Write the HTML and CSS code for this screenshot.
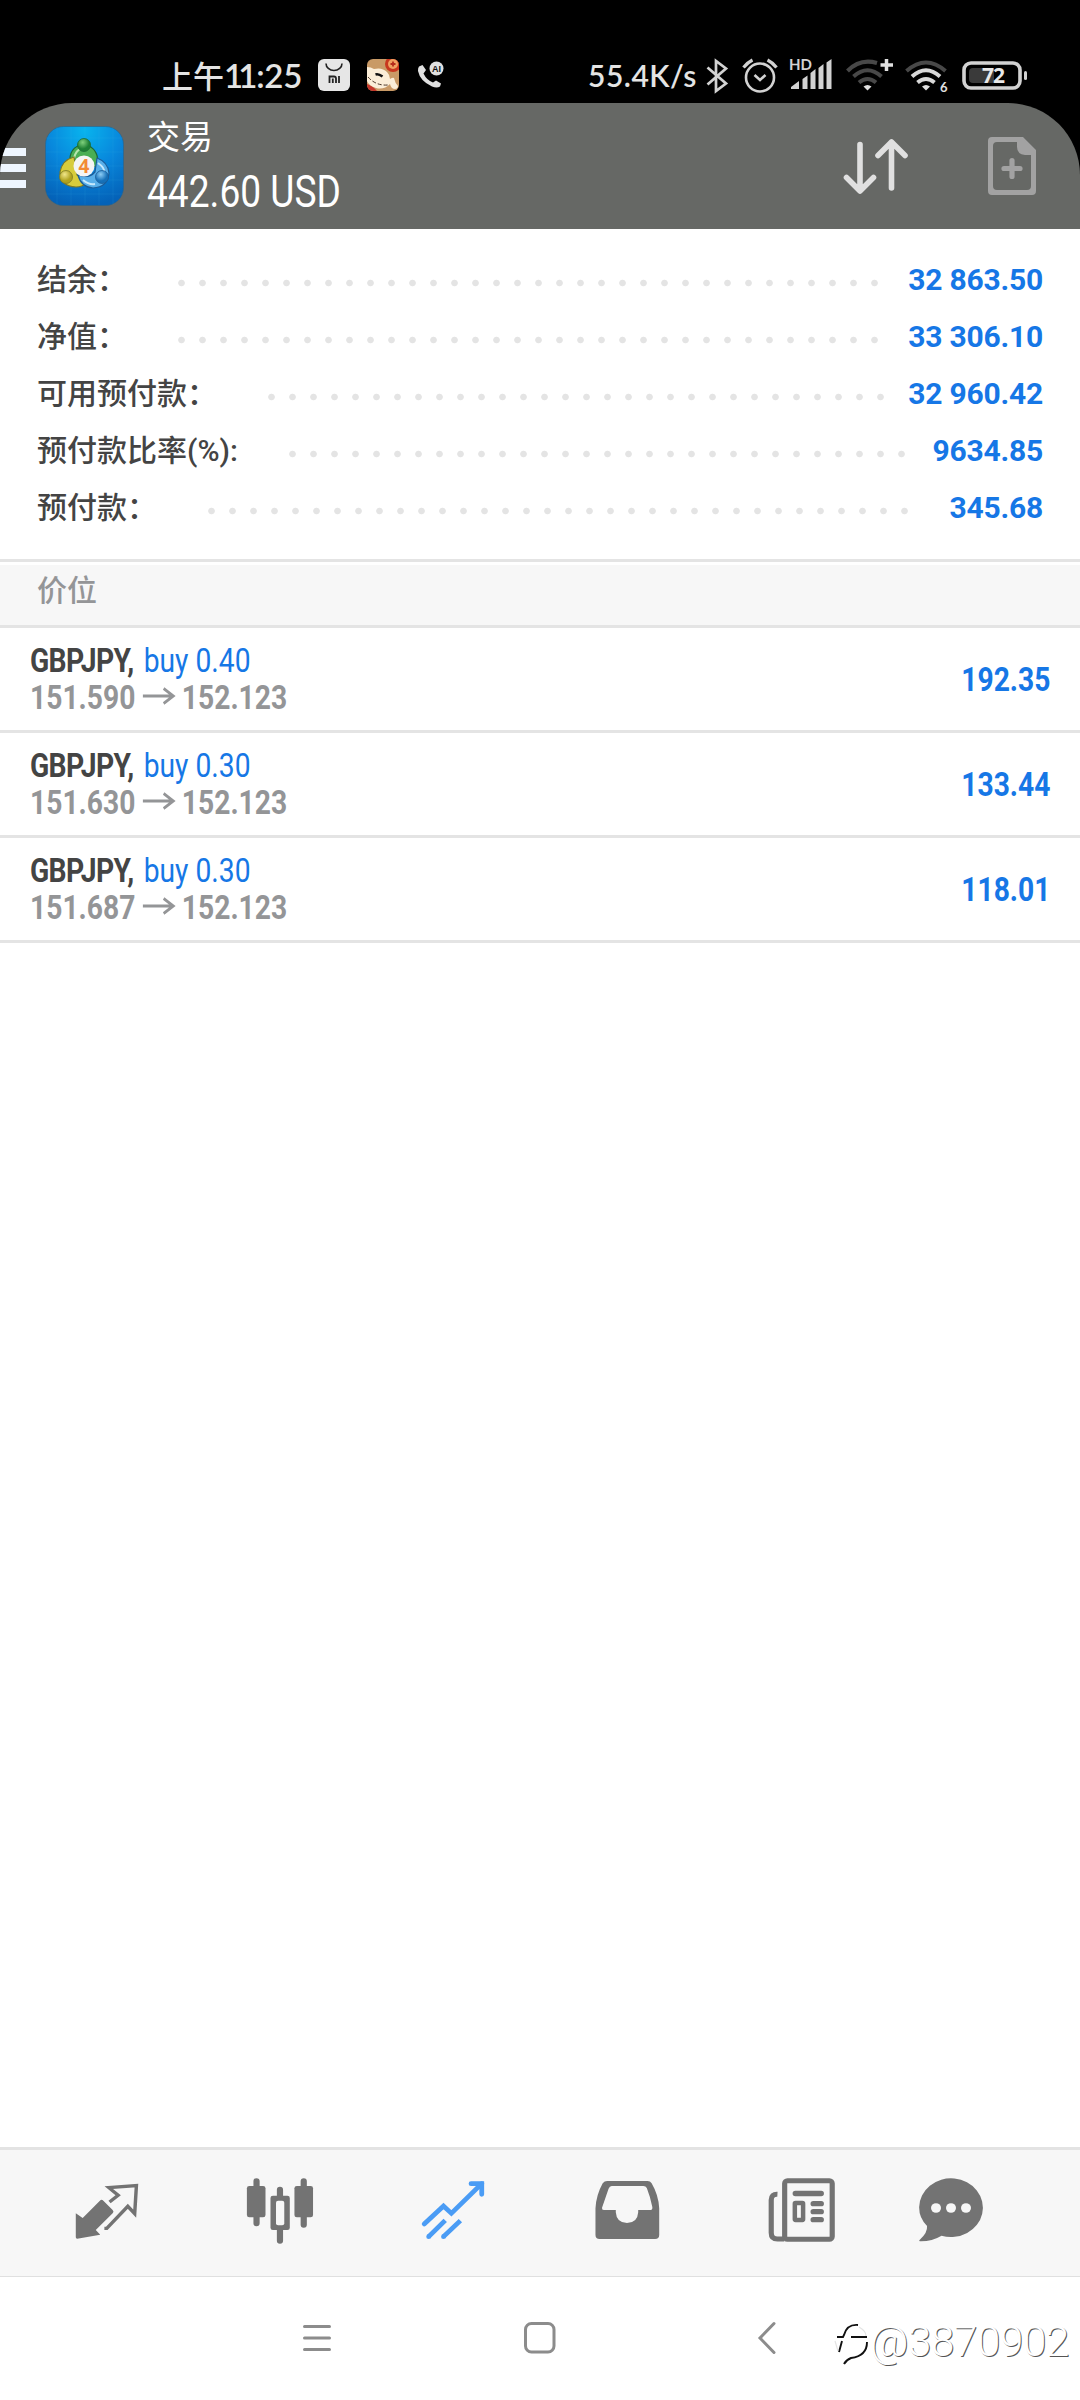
FILE: index.html
```html
<!DOCTYPE html>
<html lang="zh-CN">
<head>
  <meta charset="UTF-8" />
  <meta name="viewport" content="width=device-width, initial-scale=1.0"/>
  <title>交易</title>
  <link rel="stylesheet" href="styles.css">
</head>
<body>
  <div class="status-bar">
    <div class="clock"><span class="ampm">上午</span><span class="time"><span class="ones">11</span>:25</span></div>
    <svg class="ic-mi" viewBox="0 0 32 32">
      <rect width="32" height="32" rx="6" fill="#e6e6e6"/>
      <path d="M8 4.500a8 7 0 0 0 16 0" fill="none" stroke="#222" stroke-width="1.600"/>
      <path d="M11.500 24v-6.500h4.500q2 0 2 2V24M14.800 19.500V24M21 17v7" fill="none" stroke="#222" stroke-width="1.800"/>
    </svg>
    <svg class="ic-cat" viewBox="0 0 32 32">
      <defs><clipPath id="catClip"><rect width="32" height="32" rx="6"/></clipPath></defs>
      <g clip-path="url(#catClip)">
        <rect width="32" height="32" fill="#c99a66"/>
        <path d="M0 25q6 2 10 7H0z" fill="#c5352a"/>
        <path d="M0 8q4 0 7 2 8-2 13 3 3 3 3 7 3-2 4-1 1 5 4 8 0 3-3 3-4 0-5-5-6 6-14 4Q2 27 0 22z" fill="#fbeed8"/>
        <path d="M1 18q8 9 20 8" fill="none" stroke="#4a3528" stroke-width="1" stroke-dasharray="4 2"/>
        <path d="M8.500 15.500q3-1 7 2" fill="none" stroke="#111" stroke-width="2.600"/>
        <circle cx="26" cy="5" r="8" fill="#c8371f"/>
        <circle cx="26" cy="5" r="5" fill="#f0a060"/>
        <path d="M26 2.500v5M23.500 5h5" stroke="#b52c1c" stroke-width="1.800"/>
      </g>
    </svg>
    <svg class="ic-call" viewBox="0 0 28 28">
      <path d="M2 5.500L5.500 4l3.500 5-2.500 3.500q3 6.500 9.500 9l3-2L24 22.500l-1 3q-3 2-8 0Q3 20 1 10 .800 7 2 5.500z" fill="#e0e0e0"/>
      <circle cx="19.500" cy="7.500" r="7" fill="#e0e0e0"/>
      <text class="ai" x="19.400" y="10.700" text-anchor="middle">AI</text>
    </svg>

    <div class="speed">55.4K/s</div>
    <svg class="ic-bt" viewBox="0 0 22 34">
      <path d="M1.500 8.500L20 24.500 10 32V2l10 7.500L1.500 25.500" fill="none" stroke="#d2d2d2" stroke-width="2.700"/>
    </svg>
    <svg class="ic-alarm" viewBox="0 0 36 34">
      <g fill="none" stroke="#d2d2d2" stroke-width="2.600">
        <circle cx="18" cy="18.500" r="14"/>
        <path d="M12.500 16l5.500 5 5.500-5"/>
        <path d="M1.500 8.500q4-5 9-7.500M34.500 8.500q-4-5-9-7.500" stroke-width="3.200"/>
      </g>
    </svg>
    <svg class="ic-signal" viewBox="0 0 42 32">
      <text class="hd" x="-1" y="11">HD</text>
      <path d="M1 30v-2l8-6v8zM12.500 30V20l5-3.500V30zM20.500 30V14l5-4v20zM28.500 30V9l5-4v25zM36.500 30V3.500l5-3.500v30z" fill="#d2d2d2"/>
    </svg>
    <svg class="ic-wifi1" viewBox="0 0 48 32">
      <g fill="none" stroke="#484848" stroke-width="4">
        <path d="M1.500 12Q14-1 31 4"/>
        <path d="M7.500 17.500q14-12.500 28 0"/>
        <path d="M13 23.500q8.500-7 17 0"/>
      </g>
      <path d="M17.500 27.500q4-3 8 0l-4 4z" fill="#e0e0e0"/>
      <path d="M40.500 0v12M34.500 6h12.500" stroke="#e0e0e0" stroke-width="3.500"/>
    </svg>
    <svg class="ic-wifi2" viewBox="0 0 44 34">
      <g fill="none" stroke="#d8d8d8" stroke-width="4">
        <path d="M1.500 12q19.500-17 39 0" stroke="#484848"/>
        <path d="M7 17.500q14-12.500 28 0"/>
        <path d="M12.500 23.500q8.500-7 17 0"/>
      </g>
      <path d="M17 27.500q4-3 8 0l-4 4z" fill="#e0e0e0"/>
      <text class="six" x="35" y="33">6</text>
    </svg>
    <svg class="ic-batt" viewBox="0 0 66 30">
      <rect x="2" y="2" width="56" height="25" rx="7" fill="none" stroke="#d2d2d2" stroke-width="3.600"/>
      <path d="M11 7h21v15H11q-4 0-4-4v-7q0-4 4-4z" fill="#3a3a3a"/>
      <rect x="62" y="10" width="3" height="9" rx="1.500" fill="#d2d2d2"/>
      <text class="pct" x="31" y="22" text-anchor="middle">72</text>
    </svg>
  </div>

  <div class="header">
    <div class="menu"><i></i><i></i><i></i></div>
    <svg class="app-icon" viewBox="0 0 79 80">
      <defs>
        <radialGradient id="bg" cx="50%" cy="5%" r="95%">
          <stop offset="0" stop-color="#08b4ee"/>
          <stop offset=".5" stop-color="#0887dc"/>
          <stop offset="1" stop-color="#0462b8"/>
        </radialGradient>
        <radialGradient id="gGreen" cx="40%" cy="30%"><stop offset="0" stop-color="#7fd07c"/><stop offset="1" stop-color="#1e8034"/></radialGradient>
        <radialGradient id="gYellow" cx="40%" cy="30%"><stop offset="0" stop-color="#f0e68a"/><stop offset="1" stop-color="#b0a21e"/></radialGradient>
        <radialGradient id="gBlue" cx="40%" cy="30%"><stop offset="0" stop-color="#8ccdf5"/><stop offset="1" stop-color="#1670b8"/></radialGradient>
      </defs>
      <rect x=".5" y=".5" width="78" height="79" rx="18" fill="url(#bg)" stroke="#2c6288" stroke-opacity=".6"/>
      <path d="M12 1v78M26 1v78M40 1v78M54 1v78M68 1v78M1 12h77M1 26h77M1 40h77M1 54h77M1 68h77" stroke="#5cc8f5" stroke-opacity=".1"/>
      <path d="M25 38q-2-17 14-20 16 4 14 24l-7-3q-5-8-12-4z" fill="#4aae54" stroke="#1d6a35" stroke-width="1.200"/>
      <path d="M29 32q2-8 8-10" fill="none" stroke="#b5e6ae" stroke-width="2"/>
      <path d="M29 31q-12 3-14 15 0 14 16 15 6 0 11-4l-10-8z" fill="#d7cc3c" stroke="#7c7826" stroke-width="1.200"/>
      <path d="M33 49q3 12 15 13 15-1 16-15-1-11-12-15l-2 14q-6 7-17 3z" fill="#58aee8" stroke="#1b5c98" stroke-width="1.200"/>
      <path d="M38 54q6 5 12 4M53 37q7 5 6 9" fill="none" stroke="#c5e8fc" stroke-width="2"/>
      <circle cx="39" cy="19" r="6.500" fill="url(#gGreen)" stroke="#1d6a35" stroke-width=".8"/>
      <circle cx="21" cy="51" r="6.500" fill="url(#gYellow)" stroke="#7c7826" stroke-width=".8"/>
      <circle cx="57" cy="51" r="6.500" fill="url(#gBlue)" stroke="#1b5c98" stroke-width=".8"/>
      <circle cx="39" cy="40" r="10.500" fill="#f4f4f4"/>
      <text class="four" x="39" y="47" text-anchor="middle">4</text>
    </svg>
    <div class="titles">
      <div class="title">交易</div>
      <div class="profit">442.60 USD</div>
    </div>
    <svg class="ic-sort" viewBox="0 0 66 58">
      <path d="M17 7.500v46M3.500 40.500L17 54l13.500-13.500M48.500 51V5M35 18.500L48.500 5 62 18.500" fill="none" stroke="#e0e0e0" stroke-width="5.600" stroke-linecap="round" stroke-linejoin="round"/>
    </svg>
    <svg class="ic-new" viewBox="0 0 48 58">
      <path fill-rule="evenodd" d="M4 0h31l13 13v41q0 4-4 4H4q-4 0-4-4V4q0-4 4-4zM9 5q-4 0-4 4v40q0 4 4 4h30q4 0 4-4V18h-6q-8-1-8-8V5z" fill="#a2a2a2"/>
      <path d="M24 23.500v16M16 31.500h16" stroke="#a2a2a2" stroke-width="5.200" stroke-linecap="round"/>
    </svg>
  </div>

  <div class="account">
    <div class="line"><span class="label">结余：</span><span class="dots"><i></i></span><span class="num">32 863.50</span></div>
    <div class="line"><span class="label">净值：</span><span class="dots"><i></i></span><span class="num">33 306.10</span></div>
    <div class="line"><span class="label">可用预付款：</span><span class="dots"><i></i></span><span class="num">32 960.42</span></div>
    <div class="line"><span class="label">预付款比率(%):</span><span class="dots"><i></i></span><span class="num">9634.85</span></div>
    <div class="line"><span class="label">预付款：</span><span class="dots"><i></i></span><span class="num">345.68</span></div>
  </div>

  <div class="section">价位</div>

  <div class="positions">
    <div class="position">
      <div class="info">
        <div class="deal"><b>GBPJPY,</b><span>buy 0.40</span></div>
        <div class="prices"><span>151.590</span><svg class="arrow" viewBox="0 0 39 18"><path d="M0 9h36M25 1.500L36.500 9 25 16.500"/></svg><span>152.123</span></div>
      </div>
      <div class="gain">192.35</div>
    </div>
    <div class="position">
      <div class="info">
        <div class="deal"><b>GBPJPY,</b><span>buy 0.30</span></div>
        <div class="prices"><span>151.630</span><svg class="arrow" viewBox="0 0 39 18"><path d="M0 9h36M25 1.500L36.500 9 25 16.500"/></svg><span>152.123</span></div>
      </div>
      <div class="gain">133.44</div>
    </div>
    <div class="position">
      <div class="info">
        <div class="deal"><b>GBPJPY,</b><span>buy 0.30</span></div>
        <div class="prices"><span>151.687</span><svg class="arrow" viewBox="0 0 39 18"><path d="M0 9h36M25 1.500L36.500 9 25 16.500"/></svg><span>152.123</span></div>
      </div>
      <div class="gain">118.01</div>
    </div>
  </div>

  <div class="tabs">
    <!-- quotes -->
    <svg viewBox="0 0 209 216" preserveAspectRatio="none">
      <path d="M11 115l20 14 50-52q5-5 10 0l27 28q5 5 0 10l-49 50 13 14-67 12q-4 0-4-4z" fill="#737373"/>
      <path d="M109 81l25-20-27-23 80-6-5 84-20-22-61 66h-7" fill="none" stroke="#737373" stroke-width="10"/>
    </svg>
    <!-- charts -->
    <svg viewBox="0 0 209 216" preserveAspectRatio="none">
      <path d="M33.500 19v126M101.500 44v153M170.500 19v130" stroke="#737373" stroke-width="18" stroke-linecap="round"/>
      <rect x="5.500" y="33" width="54" height="94" rx="7" fill="#737373"/>
      <rect x="143.500" y="33" width="54" height="94" rx="7" fill="#737373"/>
      <rect x="74" y="62" width="56" height="103" rx="7" fill="#737373"/>
      <rect x="90" y="77" width="24" height="74" rx="6" fill="#f7f7f7"/>
    </svg>
    <!-- trade (active) -->
    <svg viewBox="0 0 209 216" preserveAspectRatio="none">
      <g fill="none" stroke="#4a9cf5" stroke-width="14">
        <path d="M18 147l56-54 23 22 88-89" stroke-linecap="round"/>
        <path d="M154 26h31v32" stroke-linecap="round"/>
        <path d="M31 185l48-49M74 185l49-48"/>
        <path d="M31 185h.1M74 185h.1" stroke-linecap="round"/>
        <path d="M165 26h20v20z" fill="#4a9cf5" stroke="none"/>
      </g>
    </svg>
    <!-- history -->
    <svg viewBox="0 0 209 216" preserveAspectRatio="none">
      <path fill-rule="evenodd" fill="#737373" d="M47 18H164Q172 18 176 25Q196 60 198 100V180Q198 192 186 192H25Q13 192 13 180V100Q15 60 34 25Q39 18 47 18ZM60 33Q54 33 51 41L32 98Q31 105 37 105H72V112Q74 144 104.500 144Q135 144 137 112V105H173Q179 105 178 96Q172 65 162 39Q159 33 152 33Z"/>
    </svg>
    <!-- news -->
    <svg viewBox="0 0 209 216" preserveAspectRatio="none">
      <g fill="none" stroke="#737373" stroke-width="15">
        <rect x="60" y="17.500" width="138" height="175" rx="8"/>
        <path d="M39 58q-18-1-18 17v98q0 19 18 19h20"/>
        <rect x="89.500" y="84" width="24" height="51" stroke-width="13" rx="2"/>
      </g>
      <path d="M91 55.500h75M143 86h23M143 110h23M143 134h23" stroke="#737373" stroke-width="16" stroke-linecap="round"/>
    </svg>
    <!-- chat -->
    <svg viewBox="0 0 209 216" preserveAspectRatio="none">
      <path d="M35 153Q12 130 12 97A92.500 88 0 1 1 77 182Q48 200 14 199 10 198 14 194 37 173 35 153Z" fill="#737373"/>
      <circle cx="61" cy="99" r="14.500" fill="#f7f7f7"/>
      <circle cx="104.500" cy="99" r="14.500" fill="#f7f7f7"/>
      <circle cx="148" cy="99" r="14.500" fill="#f7f7f7"/>
    </svg>
  </div>

  <div class="sysnav">
    <svg class="nav-menu" viewBox="0 0 28 32"><path d="M1.500 4.500h25M1.500 16h25M1.500 27.500h25"/></svg>
    <svg class="nav-home" viewBox="0 0 32 32"><rect x="1.500" y="1.500" width="28.500" height="28.500" rx="6"/></svg>
    <svg class="nav-back" viewBox="0 0 18 32"><path d="M16 1.500L2 16l14 14.500"/></svg>
    <div class="watermark">
      <svg viewBox="0 0 36 44">
        <g fill="none">
          <path d="M24 2Q13 1 10 12l-1 2H3M8 18L5 29M17 14h16M33 19q0 14-16 16-5 2-7 6" stroke="#111" stroke-width="1.900"/>
          <path d="M25 4q7 4 7 9M1 18l3 10" stroke="#e4e4e4" stroke-width="1.200"/>
        </g>
      </svg>
      <span>@3870902</span>
    </div>
  </div>
</body>
</html>
```
FILE: styles.css
```css
* { margin: 0; padding: 0; box-sizing: border-box; }

body {
  width: 1080px;
  height: 2400px;
  display: flex;
  flex-direction: column;
  overflow: hidden;
  background: #fff;
  font-family: Roboto, "Noto Sans CJK SC", sans-serif;
  box-shadow: inset 0 180px 0 #000;
}

svg { display: block; flex: none; overflow: visible; }

/* status bar */
.status-bar {
  height: 103px;
  padding: 59px 0 0 162px;
  display: flex;
  align-items: flex-start;
  color: #e4e4e4;
}

.clock {
  display: flex;
  width: 155.5px;
  height: 32px;
  align-items: center;
  white-space: nowrap;
}

.ampm { font-family: "Noto Sans CJK SC", sans-serif; font-size: 31px; font-weight: 500; line-height: 32px; }
.time { font-family: Lato, sans-serif; font-size: 33px; font-weight: 600; line-height: 32px; letter-spacing: -.3px; }
.ones { letter-spacing: -5px; margin-right: 4px; }

.ic-mi { width: 32px; height: 32px; }
.ic-cat { width: 32px; height: 32px; margin-left: 17px; }
.ic-call { width: 28px; height: 28px; margin: 2px 0 0 18px; }
.ai { font: bold 9px "Liberation Sans", sans-serif; fill: #111; }

.speed {
  width: 118px;
  margin-left: 143.5px;
  font-family: Lato, sans-serif;
  font-size: 30px;
  font-weight: 600;
  line-height: 32px;
  letter-spacing: .5px;
  white-space: nowrap;
}

.ic-bt { width: 22px; height: 34px; }
.ic-alarm { width: 36px; height: 34px; margin-left: 14px; }
.ic-signal { width: 42px; height: 32px; margin-left: 12px; }
.hd { font: bold 15px Lato, sans-serif; fill: #d2d2d2; }
.ic-wifi1 { width: 48px; height: 32px; margin-left: 14px; }
.ic-wifi2 { width: 44px; height: 34px; margin-left: 11px; }
.six { font: bold 13px Lato, sans-serif; fill: #e0e0e0; }
.ic-batt { width: 66px; height: 30px; margin: 2px 0 0 13px; }
.pct { font: bold 21px "Open Sans", sans-serif; fill: #e8e8e8; letter-spacing: -1px; }

/* header */
.header {
  height: 126px;
  display: flex;
  background: #666865;
  border-radius: 72px 72px 0 0;
  overflow: hidden;
  color: #fff;
}

.menu {
  width: 26px;
  height: 40px;
  margin-top: 45px;
  display: flex;
  flex-direction: column;
  gap: 8.5px;
}

.menu i { height: 7.5px; background: #eef6ff; flex: none; }

.app-icon { width: 79px; height: 80px; margin: 23px 0 0 19px; }
.four { font: bold 19px "Open Sans", sans-serif; fill: #f28a35; }

.titles { width: 696px; padding: 11px 0 0 23px; }
.title { font-size: 33px; line-height: 48px; height: 48px; }

.profit {
  display: inline-block;
  font-size: 45px;
  line-height: 60px;
  transform: scaleX(.825);
  transform-origin: left;
}

.ic-sort { width: 66px; height: 58px; margin: 34px 0 0 23px; }
.ic-new { width: 48px; height: 58px; margin: 34px 0 0 79px; }

/* account summary */
.account {
  height: 333px;
  padding: 22px 37px 0;
  background: #fff;
  border-bottom: 3px solid #e4e4e4;
}

.line { display: flex; height: 57px; align-items: center; }
.label { color: #444; font-size: 30px; font-weight: 500; white-space: nowrap; margin-top: -6px; }
.dots { flex: 1; margin: 6px 14px 0 44px; height: 8px; }

.dots i {
  display: block;
  height: 8px;
  width: round(down, 100%, 21px);
  background: radial-gradient(circle, #e4e4e4 2.9px, transparent 3.7px) 0 0 / 21px 8px repeat-x;
}

.num { color: #1677e6; font-size: 30px; font-weight: 700; letter-spacing: -.2px; margin-top: -1px; }

.section {
  height: 66px;
  padding-left: 37px;
  border-top: 3px solid #fff;
  border-bottom: 3px solid #e4e4e4;
  background: #f7f7f7;
  color: #949597;
  font-size: 30px;
  font-weight: 500;
  line-height: 51px;
}

/* open positions */
.positions { flex: 1; background: #fff; }

.position {
  height: 105px;
  padding: 0 30px;
  display: flex;
  justify-content: space-between;
  border-bottom: 3px solid #e4e4e4;
  font-size: 34px;
}

.info { padding-top: 14px; }

.deal, .prices {
  display: flex;
  height: 37px;
  line-height: 37px;
  white-space: nowrap;
  transform: scaleX(.83);
  transform-origin: left;
}

.deal b { color: #444; letter-spacing: -.8px; width: 137px; }
.deal span { color: #1677e6; }
.prices { color: #949597; font-weight: 700; align-items: center; }

.arrow { width: 39px; height: 18px; margin: -4px 8px 0 9px; }
.arrow path { fill: none; stroke: #949597; stroke-width: 3.2; }

.gain {
  color: #1677e6;
  font-weight: 700;
  line-height: 102px;
  transform: scaleX(.83);
  transform-origin: right;
}

/* bottom tabs */
.tabs {
  height: 130px;
  display: grid;
  grid-template-columns: repeat(5, 173px) 129px;
  justify-items: center;
  padding: 25px 0 0 21.5px;
  background: #f7f7f7;
  border-top: 3px solid #e3e3e3;
  border-bottom: 1px solid #e0e0e0;
}

.tabs svg { width: 72px; height: 72px; }

/* system navigation */
.sysnav { height: 123px; display: flex; padding: 45px 0 0 303px; background: #fff; }
.sysnav > svg { fill: none; stroke: #8c8c8c; stroke-width: 3; stroke-linecap: round; }
.nav-menu { width: 28px; height: 32px; }
.nav-home { width: 32px; height: 32px; margin-left: 193px; }
.nav-back { width: 18px; height: 32px; margin-left: 202px; }

.watermark { display: flex; margin-left: 58px; }
.watermark svg { width: 36px; height: 44px; margin-top: 1px; }

.watermark span {
  font-size: 42px;
  font-weight: 300;
  line-height: 40px;
  color: #fff;
  text-shadow: 1px 1px 0 #555;
  letter-spacing: -.3px;
}
```
